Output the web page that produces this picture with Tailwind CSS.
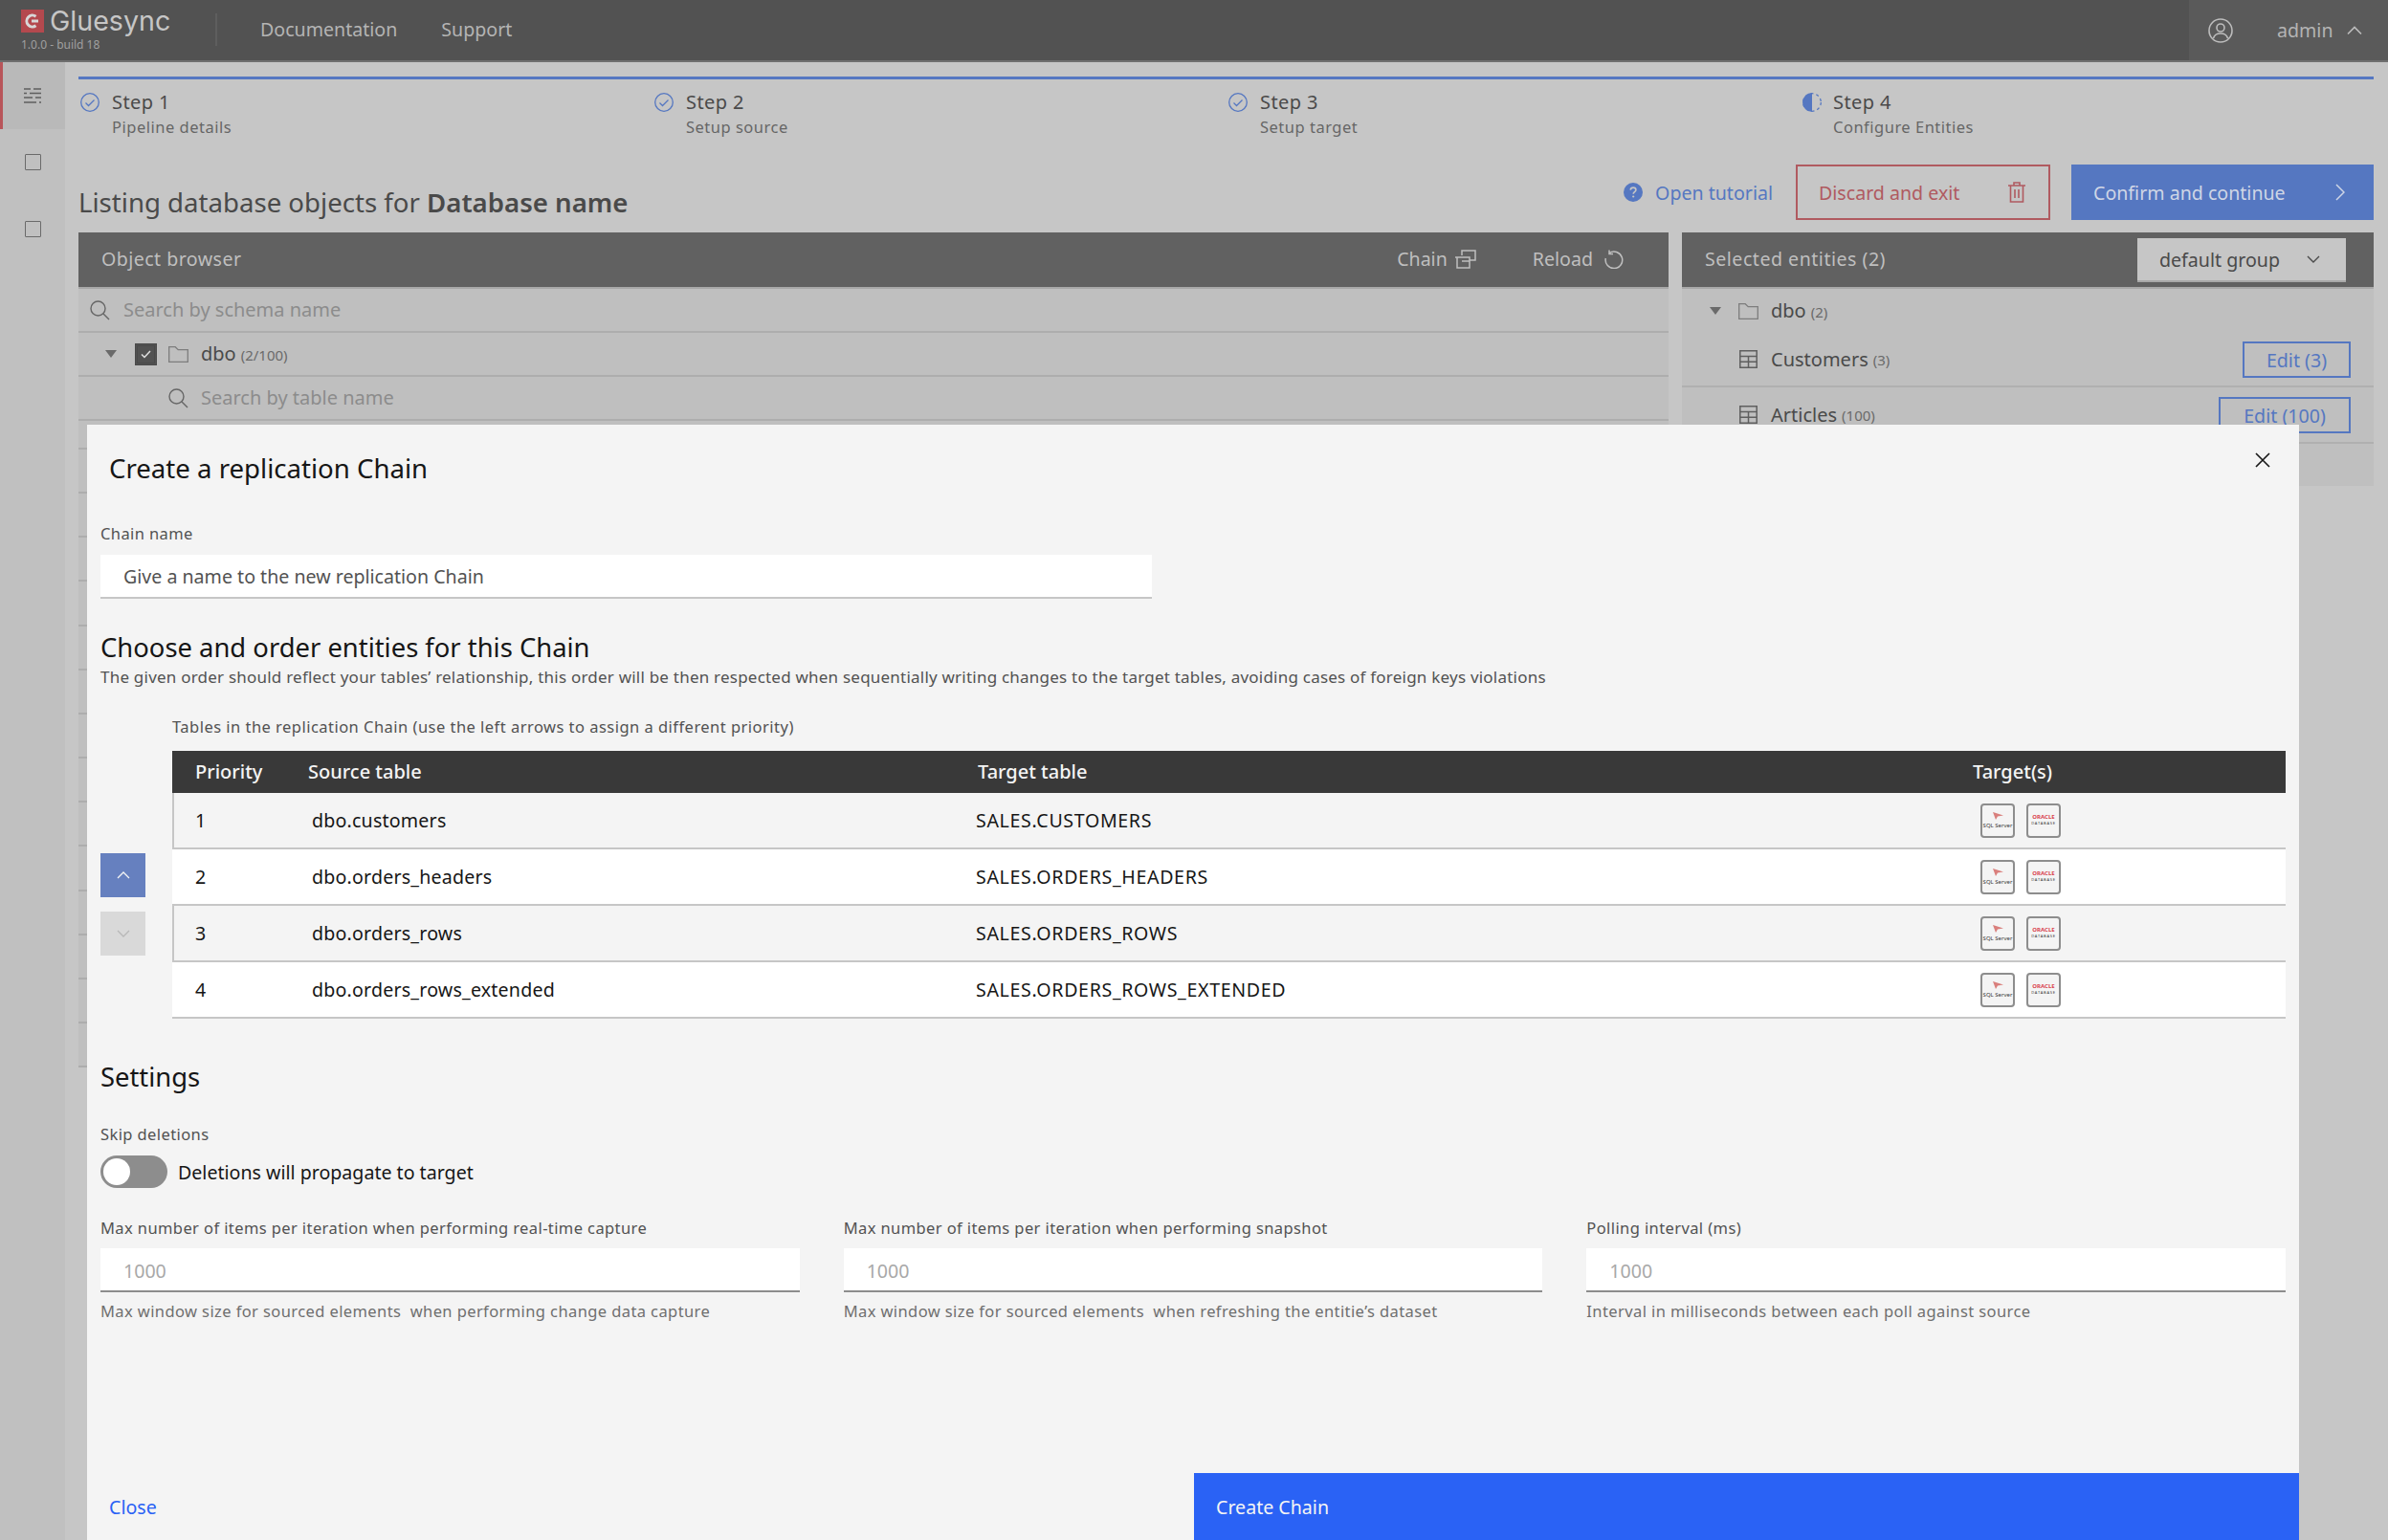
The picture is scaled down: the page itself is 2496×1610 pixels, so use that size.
<!DOCTYPE html>
<html lang="en">
<head>
    <meta charset="UTF-8">
    <title>Gluesync</title>
    <script src="https://cdn.jsdelivr.net/npm/@tailwindcss/browser@4"></script>
</head>
<body class="bg-[#c6c6c6] font-['Noto_Sans',sans-serif] text-[19.6px] text-[#4a4a4a]">
<div class="relative flex h-[1610px] w-[2496px] flex-col overflow-hidden">

    <!-- Header -->
    <header class="flex h-[65px] shrink-0 items-stretch border-b-2 border-[#6f6f6f] bg-[#525252]">
        <div class="w-[225px] pl-[22px] pt-[9px]">
            <div class="flex h-[26px] items-center gap-[6px]">
                <svg width="24" height="24" viewBox="0 0 24 24"><rect width="24" height="24" fill="#b4494e"/><path d="M15.500 7.200A6 6 0 1 0 15.500 16.800" fill="none" stroke="#d8d8d8" stroke-width="3"/><path d="M11 12h7" stroke="#d8d8d8" stroke-width="3"/></svg>
                <span class="font-['Inter',sans-serif] text-[28.6px] leading-none text-[#c6c6c6]">Gluesync</span>
            </div>
            <div class="mt-[4px] text-[12px] leading-[16px] text-[#a0a0a0]">1.0.0 - build 18</div>
        </div>
        <div class="mt-[14px] h-[34px] w-[2px] bg-[#5e5e5e]"></div>
        <nav class="flex items-center gap-[46px] pb-[1px] pl-[45px] text-[#b4b4b4]">
            <span>Documentation</span>
            <span>Support</span>
        </nav>
        <div class="ml-auto flex w-[208px] items-center bg-[#5a5a5a] pl-[20px] text-[#b4b4b4]">
            <svg width="26" height="26" viewBox="0 0 26 26" fill="none" stroke="#bcbcbc" stroke-width="1.600"><circle cx="13" cy="13" r="12"/><circle cx="13" cy="10" r="4"/><path d="M5.500 21c1-4 4-5 7.500-5s6.500 1 7.500 5"/></svg>
            <span class="ml-[46px]">admin</span>
            <svg class="ml-[14px]" width="16" height="10" viewBox="0 0 16 10" fill="none" stroke="#bcbcbc" stroke-width="1.600"><path d="M1 8.500l7-7 7 7"/></svg>
        </div>
    </header>

    <div class="flex min-h-0 flex-1">
        <!-- Sidebar -->
        <aside class="w-[68px] shrink-0 bg-[#c0c0c0]">
            <div class="flex h-[70px] items-center justify-center border-l-[3px] border-[#b8555a] bg-[#b9b9b9] pb-[1px] pr-[3px]">
                <svg width="18" height="16" viewBox="0 0 18 16" stroke="#5f5f5f" stroke-width="1.400"><path d="M0 1h7M10 1h8M0 5.500h3M6 5.500h12M0 10h9M12 10h6M0 15h13M16 15h2"/></svg>
            </div>
            <div class="flex h-[70px] items-center justify-center pb-[2px]"><div class="h-[17px] w-[17px] rounded-[1px] border-[1.500px] border-[#6a6a6a]"></div></div>
            <div class="flex h-[70px] items-center justify-center pb-[2px]"><div class="h-[17px] w-[17px] rounded-[1px] border-[1.500px] border-[#6a6a6a]"></div></div>
        </aside>

        <main class="min-w-0 flex-1 pl-[14px] pr-[15px] pt-[15px]">
            <!-- Progress -->
            <div class="h-[3px] bg-[#5577c1]"></div>
            <div class="mt-[12px] grid grid-cols-[600px_600px_600px_1fr]">
                <div class="flex gap-[13px] pl-[2px]">
                    <svg class="mt-[2px]" width="20" height="20" viewBox="0 0 20 20" fill="none" stroke="#5577c1" stroke-width="1.300"><circle cx="10" cy="10" r="9.300"/><path d="M5.500 10.500l3 3 6-6"/></svg>
                    <div><div class="text-[20px] leading-[24px] tracking-[.4px]">Step 1</div><div class="mt-[2px] text-[16.5px] leading-[24px] tracking-[.5px] text-[#666]">Pipeline details</div></div>
                </div>
                <div class="flex gap-[13px] pl-[2px]">
                    <svg class="mt-[2px]" width="20" height="20" viewBox="0 0 20 20" fill="none" stroke="#5577c1" stroke-width="1.300"><circle cx="10" cy="10" r="9.300"/><path d="M5.500 10.500l3 3 6-6"/></svg>
                    <div><div class="text-[20px] leading-[24px] tracking-[.4px]">Step 2</div><div class="mt-[2px] text-[16.5px] leading-[24px] tracking-[.5px] text-[#666]">Setup source</div></div>
                </div>
                <div class="flex gap-[13px] pl-[2px]">
                    <svg class="mt-[2px]" width="20" height="20" viewBox="0 0 20 20" fill="none" stroke="#5577c1" stroke-width="1.300"><circle cx="10" cy="10" r="9.300"/><path d="M5.500 10.500l3 3 6-6"/></svg>
                    <div><div class="text-[20px] leading-[24px] tracking-[.4px]">Step 3</div><div class="mt-[2px] text-[16.5px] leading-[24px] tracking-[.5px] text-[#666]">Setup target</div></div>
                </div>
                <div class="flex gap-[12px] pl-[2px]">
                    <svg class="mt-[2px]" width="20" height="20" viewBox="0 0 20 20" fill="none"><path d="M10 0a10 10 0 0 0 0 20z" fill="#5577c1"/><circle cx="10" cy="10" r="9.300" stroke="#5577c1" stroke-width="1.300" stroke-dasharray="3 3"/></svg>
                    <div><div class="text-[20px] leading-[24px] tracking-[.4px]">Step 4</div><div class="mt-[2px] text-[16.5px] leading-[24px] tracking-[.5px] text-[#666]">Configure Entities</div></div>
                </div>
            </div>

            <!-- Title row -->
            <div class="mt-[27px] flex h-[58px]">
                <h1 class="mt-[21px] text-[27.6px] leading-[36px]">Listing database objects for <b class="font-semibold">Database name</b></h1>
                <div class="ml-auto flex items-center">
                    <svg width="20" height="20" viewBox="0 0 20 20"><circle cx="10" cy="10" r="10" fill="#5577c1"/><path d="M7.200 7.600c.2-1.700 1.400-2.500 2.900-2.500 1.600 0 2.800.9 2.800 2.300 0 2.200-2.700 2.100-2.700 4.300" fill="none" stroke="#c6c6c6" stroke-width="1.600"/><circle cx="10.200" cy="14.500" r="1.100" fill="#c6c6c6"/></svg>
                    <span class="ml-[13px] pt-[2px] text-[#5577c1]">Open tutorial</span>
                    <div class="ml-[24px] flex h-[58px] w-[266px] items-center justify-between border-2 border-[#b05a60] pl-[22px] pr-[24px] text-[#b05a60]">
                        <span class="pt-[2px]">Discard and exit</span>
                        <svg width="18" height="22" viewBox="0 0 18 22" fill="none" stroke="#b05a60" stroke-width="1.600"><path d="M0 4h18M6 4V1h6v3M2.500 4v17h13V4M7 8v9M11 8v9"/></svg>
                    </div>
                    <div class="ml-[22px] flex h-[58px] w-[316px] items-center justify-between bg-[#5577c1] pl-[23px] pr-[30px] text-[#cfd6e6]">
                        <span class="pt-[2px]">Confirm and continue</span>
                        <svg width="10" height="18" viewBox="0 0 10 18" fill="none" stroke="#cfd6e6" stroke-width="1.500"><path d="M1 1l8 8-8 8"/></svg>
                    </div>
                </div>
            </div>

            <!-- Panels -->
            <div class="mt-[13px] flex items-start gap-[14px]">
                <section class="w-[1662px] shrink-0">
                    <div class="flex h-[59px] items-center border-b-2 border-[#a8a8a8] bg-[#616161] pb-[1px] pl-[24px] text-[#bfbfbf]">
                        <span class="tracking-[.45px]">Object browser</span>
                        <span class="ml-auto">Chain</span>
                        <svg class="ml-[7px]" width="24" height="20" viewBox="0 0 24 20" fill="none" stroke="#bfbfbf" stroke-width="1.500"><path d="M8 6V1h14v10h-6M1 8h15v11H3V8M8 12h8"/></svg>
                        <span class="ml-[58px]">Reload</span>
                        <svg class="ml-[12px] mr-[47px]" width="20" height="20" viewBox="0 0 20 20" fill="none" stroke="#bfbfbf" stroke-width="1.500"><path d="M5 3.500A8.800 8.800 0 1 1 1.300 9M5 .5v4h4"/></svg>
                    </div>
                    <div class="bg-[#bfbfbf]">
                        <div class="flex h-[46px] items-center border-b-2 border-[#adadad] pl-[12px] text-[20px] text-[#8c8c8c]">
                            <svg width="21" height="21" viewBox="0 0 21 21" fill="none" stroke="#666" stroke-width="1.400"><circle cx="8.500" cy="8.500" r="7.500"/><path d="M14 14l6 6"/></svg>
                            <span class="ml-[14px]">Search by schema name</span>
                        </div>
                        <div class="flex h-[46px] items-center border-b-2 border-[#adadad] pl-[28px]">
                            <div class="h-0 w-0 border-x-[6px] border-t-[8px] border-x-transparent border-t-[#6a6a6a]"></div>
                            <div class="ml-[19px] flex h-[23px] w-[23px] items-center justify-center border-[3px] border-double border-[#4a4a4a] bg-[#525252]">
                                <svg width="11" height="9" viewBox="0 0 11 9" fill="none" stroke="#e0e0e0" stroke-width="1.500"><path d="M1 4.500l3 3 6-6.500"/></svg>
                            </div>
                            <svg class="ml-[12px]" width="21" height="17" viewBox="0 0 21 17" fill="none" stroke="#7d7d7d" stroke-width="1.300"><path d="M.7.700h6.500l3 3h10.100v12.600H.7z"/></svg>
                            <span class="ml-[13px] text-[20px]">dbo</span>
                            <span class="ml-[5px] pt-[2px] text-[15px] text-[#6a6a6a]">(2/100)</span>
                        </div>
                        <div class="flex h-[46px] items-center border-b-2 border-[#adadad] pl-[94px] text-[20px] text-[#8c8c8c]">
                            <svg width="21" height="21" viewBox="0 0 21 21" fill="none" stroke="#666" stroke-width="1.400"><circle cx="8.500" cy="8.500" r="7.500"/><path d="M14 14l6 6"/></svg>
                            <span class="ml-[13px]">Search by table name</span>
                        </div>
                        <div class="h-[30px] border-b-2 border-[#adadad]"></div>
                        <div id="emptyRows"></div>
                    </div>
                </section>

                <section class="min-w-0 flex-1">
                    <div class="flex h-[59px] items-center border-b-2 border-[#a8a8a8] bg-[#616161] pl-[24px] text-[#bfbfbf]">
                        <span class="pb-[2px] tracking-[.5px]">Selected entities (2)</span>
                        <div class="ml-auto mr-[29px] flex h-[46px] w-[218px] items-center justify-between border-b-2 border-[#a8a8a8] bg-[#c6c6c6] pl-[23px] pr-[27px] text-[#4a4a4a]">
                            <span class="pt-[2px]">default group</span>
                            <svg width="14" height="8" viewBox="0 0 14 8" fill="none" stroke="#4a4a4a" stroke-width="1.400"><path d="M1 1l6 6 6-6"/></svg>
                        </div>
                    </div>
                    <div class="h-[206px] bg-[#bfbfbf]">
                        <div class="flex h-[46px] items-center pl-[29px]">
                            <div class="h-0 w-0 border-x-[6px] border-t-[8px] border-x-transparent border-t-[#6a6a6a]"></div>
                            <svg class="ml-[18px]" width="21" height="17" viewBox="0 0 21 17" fill="none" stroke="#7d7d7d" stroke-width="1.300"><path d="M.7.700h6.500l3 3h10.100v12.600H.7z"/></svg>
                            <span class="ml-[13px] text-[20px]">dbo</span>
                            <span class="ml-[5px] pt-[2px] text-[15px] text-[#6a6a6a]">(2)</span>
                        </div>
                        <div class="flex h-[57px] items-center border-b-2 border-[#b0b0b0] pl-[60px] pr-[24px]">
                            <svg width="19" height="19" viewBox="0 0 19 19" fill="none" stroke="#5f5f5f" stroke-width="1.500"><path d="M.8.800h17.400v17.400H.8zM.8 6.500h17.400M.8 12.300h17.400M9.500 6.500v11.700"/></svg>
                            <span class="ml-[14px] text-[20px]">Customers</span>
                            <span class="ml-[5px] pt-[2px] text-[15px] text-[#6a6a6a]">(3)</span>
                            <div class="ml-auto flex h-[38px] w-[113px] items-center justify-center border-2 border-[#5577c1] pt-[2px] text-[#5577c1]">Edit (3)</div>
                        </div>
                        <div class="flex h-[59px] items-center border-b-2 border-[#b0b0b0] pl-[60px] pr-[24px]">
                            <svg width="19" height="19" viewBox="0 0 19 19" fill="none" stroke="#5f5f5f" stroke-width="1.500"><path d="M.8.800h17.400v17.400H.8zM.8 6.500h17.400M.8 12.300h17.400M9.500 6.500v11.700"/></svg>
                            <span class="ml-[14px] text-[20px]">Articles</span>
                            <span class="ml-[5px] pt-[2px] text-[15px] text-[#6a6a6a]">(100)</span>
                            <div class="ml-auto flex h-[38px] w-[138px] items-center justify-center border-2 border-[#5577c1] pt-[2px] text-[#5577c1]">Edit (100)</div>
                        </div>
                    </div>
                </section>
            </div>
        </main>
    </div>

    <!-- Create chain modal -->
    <div class="absolute bottom-0 left-[91px] top-[444px] flex w-[2312px] flex-col bg-[#f4f4f4] text-[#161616]">
        <div class="relative min-h-0 flex-1 px-[14px] pt-[27px]">
            <h2 class="pl-[9px] text-[27.6px] leading-[36px]">Create a replication Chain</h2>
            <svg class="absolute right-[30px] top-[29px]" width="16" height="16" viewBox="0 0 16 16" stroke="#161616" stroke-width="1.600"><path d="M1 1l14 14M15 1L1 15"/></svg>

            <label class="mt-[41px] block text-[16.5px] leading-[20px] tracking-[.4px] text-[#525252]">Chain name</label>
            <input class="mt-[12px] block h-[46px] w-[1099px] border-b-2 border-[#c6c6c6] bg-white pl-[24px] placeholder:text-[#525252]" placeholder="Give a name to the new replication Chain">

            <h3 class="mt-[33px] text-[27.4px] leading-[36px]">Choose and order entities for this Chain</h3>
            <p class="mt-[2px] text-[17px] leading-[22px] tracking-[.22px] text-[#525252]">The given order should reflect your tables’ relationship, this order will be then respected when sequentially writing changes to the target tables, avoiding cases of foreign keys violations</p>

            <p class="mt-[31px] pl-[75px] text-[16.5px] leading-[20px] tracking-[.47px] text-[#525252]">Tables in the replication Chain (use the left arrows to assign a different priority)</p>

            <div class="mt-[15px] flex">
                <div class="w-[75px] shrink-0 pt-[107px]">
                    <div class="flex h-[46px] w-[47px] items-center justify-center bg-[#6680bf]">
                        <svg width="14" height="8" viewBox="0 0 14 8" fill="none" stroke="#f4f4f4" stroke-width="1.300"><path d="M1 7l6-6 6 6"/></svg>
                    </div>
                    <div class="mt-[15px] flex h-[46px] w-[47px] items-center justify-center bg-[#d9d9d9]">
                        <svg width="14" height="8" viewBox="0 0 14 8" fill="none" stroke="#b8b8b8" stroke-width="1.300"><path d="M1 1l6 6 6-6"/></svg>
                    </div>
                </div>
                <div class="min-w-0 flex-1">
                    <div class="grid h-[44px] grid-cols-[118px_700px_1040px_1fr] items-center bg-[#393939] pl-[24px] text-[20px] font-medium text-[#f4f4f4]">
                        <span>Priority</span><span>Source table</span><span>Target table</span><span>Target(s)</span>
                    </div>
                    <div id="chainRows"></div>
                </div>
            </div>

            <h3 class="mt-[43px] text-[27.4px] leading-[36px]">Settings</h3>
            <label class="mt-[32px] block text-[16.5px] leading-[20px] tracking-[.4px] text-[#525252]">Skip deletions</label>
            <div class="mt-[12px] flex items-center">
                <div class="flex h-[34px] w-[70px] items-center rounded-full bg-[#8d8d8d] pl-[3px]"><div class="h-[28px] w-[28px] rounded-full bg-white"></div></div>
                <span class="ml-[11px] pt-[1px]">Deletions will propagate to target</span>
            </div>

            <div class="mt-[32px] grid grid-cols-3 gap-x-[46px]">
                <div>
                    <label class="block text-[16.5px] leading-[20px] tracking-[.4px] text-[#525252]">Max number of items per iteration when performing real-time capture</label>
                    <input class="mt-[11px] block h-[46px] w-full border-b-2 border-[#8d8d8d] bg-white pl-[24px] pt-[3px] placeholder:text-[#a8a8a8]" placeholder="1000">
                    <p class="mt-[10px] text-[16.5px] leading-[20px] tracking-[.4px] text-[#6f6f6f]">Max window size for sourced elements &nbsp;when performing change data capture</p>
                </div>
                <div>
                    <label class="block text-[16.5px] leading-[20px] tracking-[.4px] text-[#525252]">Max number of items per iteration when performing snapshot</label>
                    <input class="mt-[11px] block h-[46px] w-full border-b-2 border-[#8d8d8d] bg-white pl-[24px] pt-[3px] placeholder:text-[#a8a8a8]" placeholder="1000">
                    <p class="mt-[10px] text-[16.5px] leading-[20px] tracking-[.4px] text-[#6f6f6f]">Max window size for sourced elements &nbsp;when refreshing the entitie’s dataset</p>
                </div>
                <div>
                    <label class="block text-[16.5px] leading-[20px] tracking-[.4px] text-[#525252]">Polling interval (ms)</label>
                    <input class="mt-[11px] block h-[46px] w-full border-b-2 border-[#8d8d8d] bg-white pl-[24px] pt-[3px] placeholder:text-[#a8a8a8]" placeholder="1000">
                    <p class="mt-[10px] text-[16.5px] leading-[20px] tracking-[.4px] text-[#6f6f6f]">Interval in milliseconds between each poll against source</p>
                </div>
            </div>
        </div>

        <!-- Modal footer -->
        <div class="grid h-[70px] shrink-0 grid-cols-[1157px_1fr]">
            <div class="flex items-center pl-[23px] pt-[2px] text-[#2a62f5]">Close</div>
            <div class="flex items-center bg-[#2a62f5] pl-[23px] pt-[2px] text-[#f4f4f4]">Create Chain</div>
        </div>
    </div>
</div>

<script>
    // Untitled rows of the object browser, hidden behind the modal
    const emptyRows = document.getElementById('emptyRows');
    emptyRows.innerHTML = Array(14).fill('<div class="h-[46.17px] border-b-2 border-[#adadad]"></div>').join('');

    const chain = [
        ['1', 'dbo.customers', 'SALES.CUSTOMERS'],
        ['2', 'dbo.orders_headers', 'SALES.ORDERS_HEADERS'],
        ['3', 'dbo.orders_rows', 'SALES.ORDERS_ROWS'],
        ['4', 'dbo.orders_rows_extended', 'SALES.ORDERS_ROWS_EXTENDED']
    ];

    // Small target badges
    const sqlBadge = `
        <div class="flex h-[36px] w-[36px] flex-col items-center justify-center rounded-[4px] border-2 border-[#8d8d8d] bg-[#f4f4f4]">
            <svg width="13" height="10" viewBox="0 0 13 10"><path d="M1 1l11 3.500-6 1-2 3.500z" fill="#d97f7c"/></svg>
            <span class="mt-[2px] whitespace-nowrap text-[6px] leading-[7px] text-[#393939]">SQL Server</span>
        </div>`;
    const oracleBadge = `
        <div class="flex h-[36px] w-[36px] flex-col items-center justify-center rounded-[4px] border-2 border-[#8d8d8d] bg-[#f4f4f4]">
            <span class="text-[6px] font-bold leading-[7px] text-[#d9434e]">ORACLE</span>
            <span class="text-[4px] leading-[6px] tracking-[.8px] text-[#393939]">DATABASE</span>
        </div>`;

    document.getElementById('chainRows').innerHTML = chain.map((row, i) => `
        <div class="grid h-[59px] grid-cols-[118px_698px_1041px_1fr] items-center border-b-2 border-[#c6c6c6] ${i % 2 ? 'bg-white pl-[24px]' : 'border-l-2 bg-[#f4f4f4] pl-[22px]'}">
            <span class="pt-[1px]">${row[0]}</span>
            <span class="pl-[4px] pt-[1px] tracking-[.2px]">${row[1]}</span>
            <span class="pt-[1px] tracking-[.65px]">${row[2]}</span>
            <div class="flex gap-[12px] pl-[9px]">${sqlBadge}${oracleBadge}</div>
        </div>
    `).join('');
</script>
</body>
</html>
